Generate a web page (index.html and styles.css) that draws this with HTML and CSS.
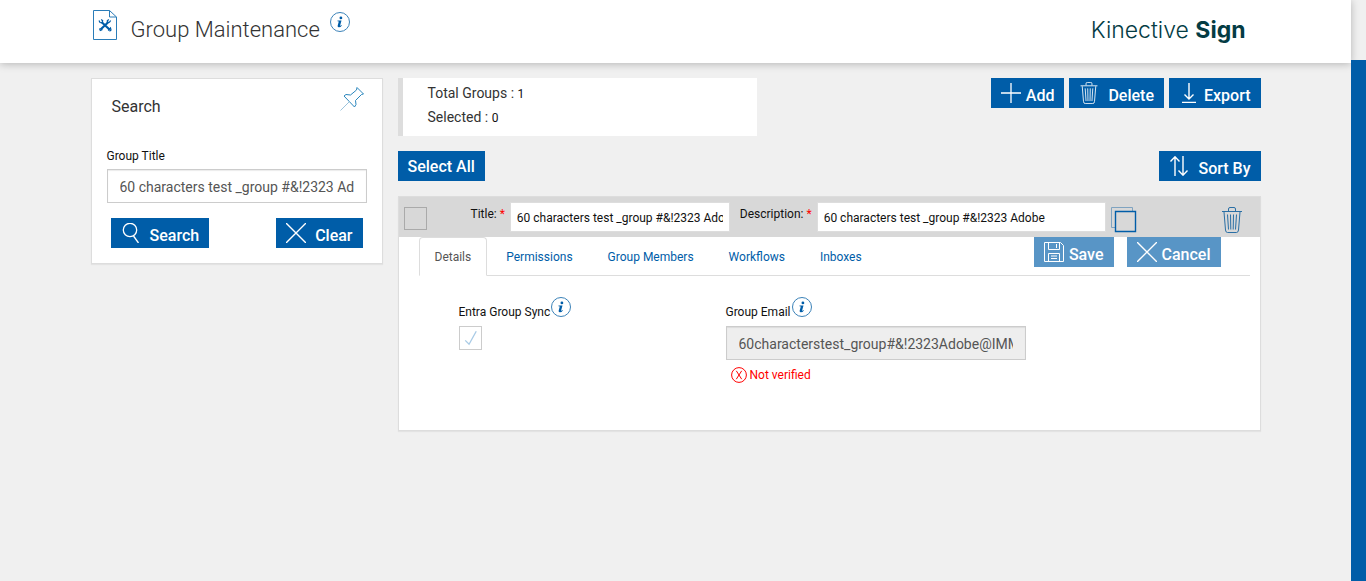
FILE: index.html
```html
<!DOCTYPE html>
<html lang="en">
<head>
    <meta charset="UTF-8">
    <meta name="viewport" content="width=device-width, initial-scale=1.0">
    <title>Group Maintenance</title>
    <link rel="stylesheet" href="styles.css">
</head>
<body>
    <!-- shared icons -->
    <svg class="sprite" aria-hidden="true">
        <symbol id="info" viewBox="0 0 20 20">
            <circle cx="10" cy="10" r="9.5" fill="#fff" stroke="#3b82b8"/>
            <circle cx="10.9" cy="5.9" r="1.4" fill="#005da8"/>
            <path d="M7.500 8.400h4L10.200 13.300q-.1 1 .8.2l.5-.5.4.4Q10.300 15.500 8.600 15.200q-1.300-.4-.9-1.800L8.800 9.400l-1.300-.2z" fill="#005da8"/>
        </symbol>
        <symbol id="close" viewBox="0 0 20 20">
            <path d="M0 0l20 20M20 0L0 20" fill="none" stroke="currentColor" stroke-width="1.4"/>
        </symbol>
        <symbol id="trash" viewBox="0 0 20 26">
            <path d="M0 4.500h20M6.500 4V2q0-1.500 1.500-1.500h4q1.500 0 1.500 1.500v2M2 5l1.500 18q.2 2.500 2 2.500h9q1.800 0 2-2.500L18 5M5.500 7.500l1 15M8.500 7.500l.3 15M11.500 7.500l-.3 15M14.500 7.500l-1 15" fill="none" stroke="currentColor"/>
        </symbol>
    </svg>

    <div class="page">
        <header class="header">
            <div class="container header-inner">
                <svg class="doc-icon" viewBox="0 0 24 30" aria-hidden="true">
                    <path d="M.5.5h16l7 6.500v22.500H.5z" fill="none" stroke="#2a7cb8"/>
                    <path d="M16.500.5V7h7" fill="none" stroke="#2a7cb8"/>
                    <path d="M8.500 12l8 7.500M15.500 12l-8 7.500" stroke="#005da8" stroke-width="2.200"/>
                    <path d="M6 10.500l1 2 2.200.3.500-2-1.500-1.300M17.700 10.500l-1.200 1.700-2.200.3v-1.700l1.500-1.300M6.500 18.500l.8 2 2.200-1M15.200 20.500l2.300-2.500.5 2-1.500 1.300" fill="none" stroke="#005da8" stroke-width="1.200"/>
                </svg>
                <h1>Group Maintenance</h1>
                <svg class="info-icon" role="img" aria-label="Information"><use href="#info"/></svg>
                <div class="logo">Kinective <b>Sign</b></div>
            </div>
        </header>

        <main class="container content">
            <form class="search-panel" onsubmit="return false">
                <div class="search-head">
                    <h2>Search</h2>
                    <svg class="pin" viewBox="0 0 24 24" aria-hidden="true">
                        <path d="M17 .5L23.500 7 21.500 7.500 15.500 13.500 16 17.500 14.500 20 4 9 6 7.500 10.500 8 16.500 3z" fill="none" stroke="#2a86bd"/>
                        <path d="M9.500 14.500l-9 9" stroke="#9cc4dc"/>
                    </svg>
                </div>
                <label for="groupTitle">Group Title</label>
                <input class="form-control" id="groupTitle" type="text" value="60 characters test _group #&amp;!2323 Adobe">
                <div class="search-actions">
                    <button type="submit" class="btn btn-wide">
                        <svg viewBox="0 0 20 20" aria-hidden="true"><circle cx="9" cy="7" r="6.700" fill="none" stroke="currentColor" stroke-width="1.300"/><path d="M12.500 13l5 7" stroke="currentColor" stroke-width="1.300"/></svg>
                        <span>Search</span>
                    </button>
                    <button type="reset" class="btn btn-wide">
                        <svg aria-hidden="true"><use href="#close"/></svg>
                        <span>Clear</span>
                    </button>
                </div>
            </form>

            <section class="groups">
                <div class="toolbar">
                    <div class="stats">
                        <div>Total Groups : <span>1</span></div>
                        <div>Selected : <span>0</span></div>
                    </div>
                    <div class="toolbar-buttons">
                        <button type="button" class="btn">
                            <svg viewBox="0 0 20 20" aria-hidden="true"><path d="M0 10h20M10 0v20" stroke="currentColor" stroke-width="1.300"/></svg>
                            <span>Add</span>
                        </button>
                        <button type="button" class="btn btn-wide">
                            <svg class="bin" aria-hidden="true"><use href="#trash"/></svg>
                            <span>Delete</span>
                        </button>
                        <button type="button" class="btn">
                            <svg viewBox="0 0 20 20" aria-hidden="true"><path d="M10 0v16M5.500 11.500L10 16l4.500-4.500M3 19.500h14" fill="none" stroke="currentColor" stroke-width="1.400"/></svg>
                            <span>Export</span>
                        </button>
                    </div>
                </div>

                <div class="toolbar select-row">
                    <button type="button" class="btn btn-text">Select All</button>
                    <button type="button" class="btn btn-wide">
                        <svg viewBox="0 0 20 20" aria-hidden="true"><path d="M6 20V.8M1.500 5.500L6 .8l4.500 4.700M14 0v19.200M9.500 14.500l4.500 4.700 4.500-4.700" fill="none" stroke="currentColor" stroke-width="1.400"/></svg>
                        <span>Sort By</span>
                    </button>
                </div>

                <article class="card">
                    <div class="card-head">
                        <input type="checkbox" class="check" aria-label="Select group">
                        <label for="title">Title: <em>*</em></label>
                        <input class="edit title-edit" id="title" type="text" value="60 characters test _group #&amp;!2323 Adobe">
                        <label for="description">Description: <em>*</em></label>
                        <input class="edit description-edit" id="description" type="text" value="60 characters test _group #&amp;!2323 Adobe">
                        <button type="button" class="icon-btn" aria-label="Copy">
                            <svg class="copy" viewBox="0 0 26 26"><path d="M4 20.500H.5V.5h21V4" fill="none" stroke="#7fa3c0"/><path d="M4.500 4.500h20v20h-20z" fill="none" stroke="#005da8" stroke-width="1.400"/></svg>
                        </button>
                        <button type="button" class="icon-btn remove" aria-label="Delete group">
                            <svg><use href="#trash"/></svg>
                        </button>
                    </div>

                    <nav class="tabs">
                        <a href="#details" class="active">Details</a>
                        <a href="#permissions">Permissions</a>
                        <a href="#members">Group Members</a>
                        <a href="#workflows">Workflows</a>
                        <a href="#inboxes">Inboxes</a>
                        <div class="tab-actions">
                            <button type="button" class="btn" disabled>
                                <svg viewBox="0 0 20 20" aria-hidden="true"><path d="M.5.5h16l3 3v16H.5zM4.500.5v7h11v-7M4.500 19.500v-8h11v8M7 14h6M7 16.500h6M12.500 2v4" fill="none" stroke="currentColor"/></svg>
                                <span>Save</span>
                            </button>
                            <button type="button" class="btn" disabled>
                                <svg aria-hidden="true"><use href="#close"/></svg>
                                <span>Cancel</span>
                            </button>
                        </div>
                    </nav>

                    <div class="details" id="details">
                        <div class="field">
                            <div class="field-label">
                                <label for="sync">Entra Group Sync</label>
                                <svg class="info-icon" role="img" aria-label="Information"><use href="#info"/></svg>
                            </div>
                            <div class="sync-box">
                                <input type="checkbox" class="check" id="sync" checked disabled>
                                <svg viewBox="0 0 24 24" aria-hidden="true"><path d="M6.500 14.500l4 4L18 5" fill="none" stroke="#a9cbe6" stroke-width="1.400"/></svg>
                            </div>
                        </div>
                        <div class="field">
                            <div class="field-label">
                                <label for="email">Group Email</label>
                                <svg class="info-icon" role="img" aria-label="Information"><use href="#info"/></svg>
                            </div>
                            <input class="form-control" id="email" type="text" value="60characterstest_group#&amp;!2323Adobe@IMM.com" disabled>
                            <div class="status">
                                <svg viewBox="0 0 16 16" aria-hidden="true"><circle cx="8" cy="8" r="7.400" fill="none" stroke="currentColor"/><path d="M5.300 3.800l5.400 8.400M10.700 3.800L5.300 12.200" stroke="currentColor"/></svg>
                                Not verified
                            </div>
                        </div>
                    </div>
                </article>
            </section>
        </main>
    </div>
    <div class="side-rail"></div>
</body>
</html>
```

FILE: styles.css
```css
* {
    box-sizing: border-box;
}

body {
    display: flex;
    min-height: 100vh;
    margin: 0;
    background: #f0f0f0;
    color: #111;
    font-family: Roboto, Arial, sans-serif;
    font-size: 12px;
    line-height: 16px;
}

h1, h2 {
    margin: 0;
}

input, button {
    font-family: inherit;
}

svg {
    display: block;
    flex-shrink: 0;
}

.sprite {
    display: none;
}

.page {
    flex: 1;
    min-width: 0;
}

.side-rail {
    width: 15px;
    margin-top: 60px;
    background: #005da8;
}

.container {
    max-width: 1170px;
    margin: 0 auto;
}

/* header */
.header {
    background: #fff;
    box-shadow: 0 1px 8px rgba(0, 0, 0, 0.25);
}

.header-inner {
    display: flex;
    align-items: flex-start;
    padding: 10px 15px 18px 2px;
}

.doc-icon {
    width: 24px;
    height: 30px;
}

.header h1 {
    margin: 5px 10px 0 14px;
    color: #333;
    font-size: 22px;
    font-weight: 300;
    line-height: 30px;
}

.info-icon {
    width: 20px;
    height: 20px;
}

.header .info-icon {
    margin-top: 2px;
}

.logo {
    margin-left: auto;
    padding-top: 8px;
    color: #043c44;
    font-family: Inter, sans-serif;
    font-size: 23px;
    font-weight: 300;
    line-height: 24px;
}

.logo b {
    font-weight: 700;
}

/* buttons */
.btn {
    display: flex;
    align-items: center;
    gap: 5px;
    height: 30px;
    padding: 0 10px;
    border: 0;
    background: #005da8;
    color: #fff;
    font-size: 16px;
    font-weight: 500;
    line-height: 20px;
    white-space: nowrap;
    cursor: pointer;
}

.btn-wide {
    gap: 9px;
}

.btn-text {
    padding-top: 2px;
}

.btn svg {
    width: 20px;
    height: 20px;
}

.btn .bin {
    height: 22px;
}

.btn span {
    padding-top: 5px;
}

.btn:disabled {
    opacity: 0.65;
    cursor: default;
}

.form-control {
    width: 100%;
    height: 34px;
    padding: 1px 12px 0;
    border: 1px solid #ccc;
    background: #fff;
    box-shadow: inset 0 1px 1px rgba(0, 0, 0, 0.08);
    color: #555;
    font-size: 14px;
}

.form-control:disabled {
    background: #eee;
}

/* page grid */
.content {
    display: grid;
    grid-template-columns: 292px minmax(0, 1fr);
    align-items: start;
    gap: 15px;
    padding-top: 15px;
}

.search-panel,
.card {
    border: 1px solid #ddd;
    background: #fff;
    box-shadow: 0 1px 1px rgba(0, 0, 0, 0.05);
}

.search-panel {
    padding: 8px 15px 15px;
}

.search-panel label {
    display: block;
    margin-bottom: 5px;
}

.search-head {
    display: flex;
    justify-content: space-between;
    margin-bottom: 29px;
    padding: 0 3px 0 5px;
}

.search-head h2 {
    margin-top: 8px;
    color: #333;
    font-size: 16px;
    font-weight: 400;
    line-height: 24px;
}

.pin {
    width: 24px;
    height: 24px;
}

.search-actions {
    display: flex;
    justify-content: space-between;
    margin-top: 15px;
    padding: 0 4px;
}

/* toolbar */
.toolbar {
    display: flex;
    align-items: flex-start;
    justify-content: space-between;
}

.select-row {
    margin: 15px 0;
}

.toolbar-buttons {
    display: flex;
    gap: 5px;
}

.stats {
    width: 359px;
    padding: 3px 0 7px 25px;
    border-left: 5px solid #ddd;
    background: #fff;
    color: #333;
    font-size: 14px;
    line-height: 24px;
}

.stats span {
    color: #111;
    font-size: 12px;
    line-height: 16px;
}

/* group card */
.card-head {
    display: flex;
    align-items: flex-start;
    padding: 5px 18px 4px 5px;
    background: #d8d8d8;
}

.card-head label {
    margin-top: 4px;
    padding: 0 5px 0 10px;
    white-space: nowrap;
}

.card-head em {
    color: #f00;
    font-style: normal;
}

.check {
    appearance: none;
    width: 23px;
    height: 23px;
    margin: 0;
    border: 1px solid #aaa;
}

.card-head .check {
    flex-shrink: 0;
    margin: 5px 34px 0 0;
}

.edit {
    min-width: 0;
    height: 30px;
    padding: 1px 6px 0;
    border: 1px solid #ddd;
    background: #fff;
    color: #111;
    font-size: 12px;
}

.title-edit {
    flex: 0 1 220px;
}

.description-edit {
    flex: 0 1 289px;
}

.icon-btn {
    margin: 5px 0 0 5px;
    padding: 0;
    border: 0;
    background: none;
    color: #2a6fa5;
    cursor: pointer;
}

.icon-btn svg {
    width: 20px;
    height: 26px;
}

.icon-btn .copy {
    width: 26px;
}

.icon-btn.remove {
    margin-left: auto;
}

.tabs {
    display: flex;
    gap: 3px;
    height: 39px;
    margin: 0 10px 0 20px;
    border-bottom: 1px solid #ddd;
}

.tabs a {
    height: 39px;
    padding: 11px 15px;
    border: 1px solid transparent;
    color: #005da8;
    text-decoration: none;
    white-space: nowrap;
}

.tabs .active {
    border-color: #ddd;
    border-bottom-color: #fff;
    border-radius: 4px 4px 0 0;
    background: #fff;
    color: #555;
}

.tab-actions {
    display: flex;
    gap: 13px;
    margin: 0 29px 0 auto;
}

.details {
    display: grid;
    grid-template-columns: 237px minmax(0, 300px);
    gap: 30px;
    padding: 21px 60px 47px;
}

.field-label {
    display: flex;
    gap: 1px;
    height: 23px;
    margin-bottom: 6px;
}

.field-label label {
    align-self: flex-end;
}

.sync-box {
    display: grid;
    width: 23px;
}

.sync-box > * {
    grid-area: 1 / 1;
    width: 23px;
    height: 24px;
}

.sync-box .check {
    border-color: #ccc;
}

.sync-box svg {
    pointer-events: none;
}

.status {
    display: flex;
    gap: 3px;
    margin: 7px 0 0 5px;
    color: #f00;
}

.status svg {
    width: 16px;
    height: 16px;
}
```
